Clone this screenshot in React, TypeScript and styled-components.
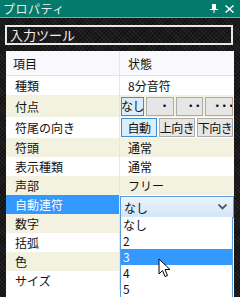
import styled, { createGlobalStyle } from "styled-components";

const GlobalStyle = createGlobalStyle`
  html, body { margin: 0; padding: 0; }
  body {
    width: 240px; height: 297px; overflow: hidden;
    font-family: "Noto Sans CJK JP", "Noto Sans", sans-serif;
  }
`;

const Panel = styled.div`
  position: relative;
  width: 240px; height: 297px;
  overflow: hidden;
  background-color: #1a1a1a;
  background-image:
    repeating-linear-gradient(45deg, rgba(255,255,255,.05) 0 1px, transparent 1px 3px),
    repeating-linear-gradient(-45deg, rgba(0,0,0,.4) 0 1px, transparent 1px 3px);
  display: flex; flex-direction: column;
`;

const TitleBar = styled.div`
  height: 17px;
  background: #037a6c;
  border-bottom: 1px solid #9a9a9a;
  display: flex; align-items: center;
  padding: 0 4px 0 3px;
  color: #e4efec;
  font-size: 12px;
  line-height: 17px;
`;

const TitleText = styled.span`
  flex: 1;
  letter-spacing: 0.5px;
`;

const TitleButtons = styled.div`
  display: flex; align-items: center; gap: 7px;
  padding-right: 2px;
`;

const ToolBox = styled.div`
  margin: 7px 7px 0 5px;
  height: 16px;
  border: 2px solid #e8e8e8;
  color: #f2f2f2;
  font-size: 13px;
  line-height: 16px;
  padding-left: 3px;
`;

const Grid = styled.div`
  margin: 6px 6px 0 6px;
  background: #fff;
  flex: 1;
  font-size: 12px;
  color: #111;
`;

const Row = styled.div<{ $h?: number; $alt?: boolean }>`
  display: grid;
  grid-template-columns: 114px 1fr;
  height: ${p => p.$h ?? 19}px;
  background: ${p => (p.$alt ? "#f3f2e0" : "#fff")};
`;

const HeaderRow = styled(Row)`
  background: #f8f9fd;
  border-bottom: 1px solid #dce4f2;
  height: 24px;
`;

const Label = styled.div<{ $selected?: boolean; $header?: boolean }>`
  display: flex; align-items: center;
  padding-left: ${p => (p.$header ? 7 : 9)}px;
  background: ${p => (p.$selected ? "#3399ff" : "transparent")};
  color: ${p => (p.$selected ? "#fff" : "#111")};
  border-right: 1px solid #e6e6e6;
`;

const Value = styled.div<{ $flush?: boolean }>`
  position: relative;
  display: flex; align-items: center;
  padding-left: ${p => (p.$flush ? 0 : 8)}px;
`;

const ButtonGroup = styled.div`
  display: flex; gap: 2px;
  padding: 1px;
  width: 100%;
`;

const ToggleButton = styled.button<{ $active?: boolean; $dots?: boolean }>`
  flex: 1 1 0;
  min-width: 0;
  height: 19px;
  margin: 0;
  padding: 0 0 0 ${p => (p.$dots ? 5 : 0)}px;
  font-family: inherit;
  font-size: 12px;
  letter-spacing: ${p => (p.$dots ? -5 : -0.5)}px;
  white-space: nowrap;
  overflow: hidden;
  color: #111;
  background: ${p => (p.$active ? "#dbecfa" : "#e6e6e6")};
  border: 1px solid ${p => (p.$active ? "#3c8fd4" : "#acacac")};
  display: flex; align-items: center; justify-content: center;
  line-height: 1;
`;

const Combo = styled.div`
  position: absolute;
  left: 0; right: 0; top: 1px;
  height: 20px;
  border: 1px solid #5a9ee0;
  background: linear-gradient(#ebf4fc, #d2e6f8);
  display: flex; align-items: center;
  padding-left: 3px;
  z-index: 2;
`;

const ComboText = styled.span`
  flex: 1;
`;

const DropList = styled.ul`
  position: absolute;
  left: 0; top: 22px;
  width: 111px;
  margin: 0; padding: 0;
  list-style: none;
  background: #fff;
  border: 1px solid #5a9ee0;
  border-top: none;
  z-index: 3;
`;

const DropItem = styled.li<{ $selected?: boolean }>`
  height: 16px;
  line-height: 16px;
  padding-left: 2px;
  background: ${p => (p.$selected ? "#3399ff" : "transparent")};
  color: ${p => (p.$selected ? "#fff" : "#111")};
`;

const Cursor = styled.svg`
  position: absolute;
  left: 158px; top: 258px;
  z-index: 5;
`;

const plainRows: { label: string; value?: string; alt?: boolean }[] = [
  { label: "符頭", value: "通常", alt: true },
  { label: "表示種類", value: "通常" },
  { label: "声部", value: "フリー", alt: true },
];

const lowerRows: { label: string; alt?: boolean }[] = [
  { label: "数字", alt: true },
  { label: "括弧" },
  { label: "色", alt: true },
  { label: "サイズ" },
];

export default function App() {
  return (
    <Panel>
      <GlobalStyle />
      <TitleBar>
        <TitleText>プロパティ</TitleText>
        <TitleButtons>
          <svg width="8" height="9" viewBox="0 0 8 9">
            <path d="M2 0h4v5H2zM3 1h1v4H3z" fill="#fff" />
            <path d="M0 5h8v1H0zM3.5 6h1v3h-1z" fill="#fff" />
          </svg>
          <svg width="9" height="8" viewBox="0 0 9 8">
            <path d="M1 0l3.5 3L8 0l1 1-3.5 3L9 7l-1 1-3.5-3L1 8 0 7l3.5-3L0 1z" fill="#fff" />
          </svg>
        </TitleButtons>
      </TitleBar>
      <ToolBox>入力ツール</ToolBox>
      <Grid>
        <HeaderRow>
          <Label $header>項目</Label>
          <Value>状態</Value>
        </HeaderRow>
        <Row>
          <Label>種類</Label>
          <Value>8分音符</Value>
        </Row>
        <Row $alt $h={22}>
          <Label>付点</Label>
          <Value $flush>
            <ButtonGroup>
              <ToggleButton $active>なし</ToggleButton>
              <ToggleButton $dots>・</ToggleButton>
              <ToggleButton $dots>・・</ToggleButton>
              <ToggleButton $dots>・・・</ToggleButton>
            </ButtonGroup>
          </Value>
        </Row>
        <Row $h={21}>
          <Label>符尾の向き</Label>
          <Value $flush>
            <ButtonGroup>
              <ToggleButton $active>自動</ToggleButton>
              <ToggleButton>上向き</ToggleButton>
              <ToggleButton>下向き</ToggleButton>
            </ButtonGroup>
          </Value>
        </Row>
        {plainRows.map(r => (
          <Row key={r.label} $alt={r.alt}>
            <Label>{r.label}</Label>
            <Value>{r.value}</Value>
          </Row>
        ))}
        <Row>
          <Label $selected>自動連符</Label>
          <Value>
            <Combo>
              <ComboText>なし</ComboText>
              <svg width="9" height="6" viewBox="0 0 9 6" style={{ marginRight: 6 }}>
                <path d="M0.5 0.5l4 4 4-4" stroke="#555" strokeWidth="1.8" fill="none" />
              </svg>
            </Combo>
            <DropList>
              <DropItem>なし</DropItem>
              <DropItem>2</DropItem>
              <DropItem $selected>3</DropItem>
              <DropItem>4</DropItem>
              <DropItem>5</DropItem>
            </DropList>
          </Value>
        </Row>
        {lowerRows.map(r => (
          <Row key={r.label} $alt={r.alt}>
            <Label>{r.label}</Label>
            <Value />
          </Row>
        ))}
      </Grid>
      <Cursor width="14" height="20" viewBox="0 0 14 20">
        <path d="M1 1v15l3.5-3.5 2.5 6 2.5-1-2.5-6H12z" fill="#fff" stroke="#000" strokeWidth="1" />
      </Cursor>
    </Panel>
  );
}
